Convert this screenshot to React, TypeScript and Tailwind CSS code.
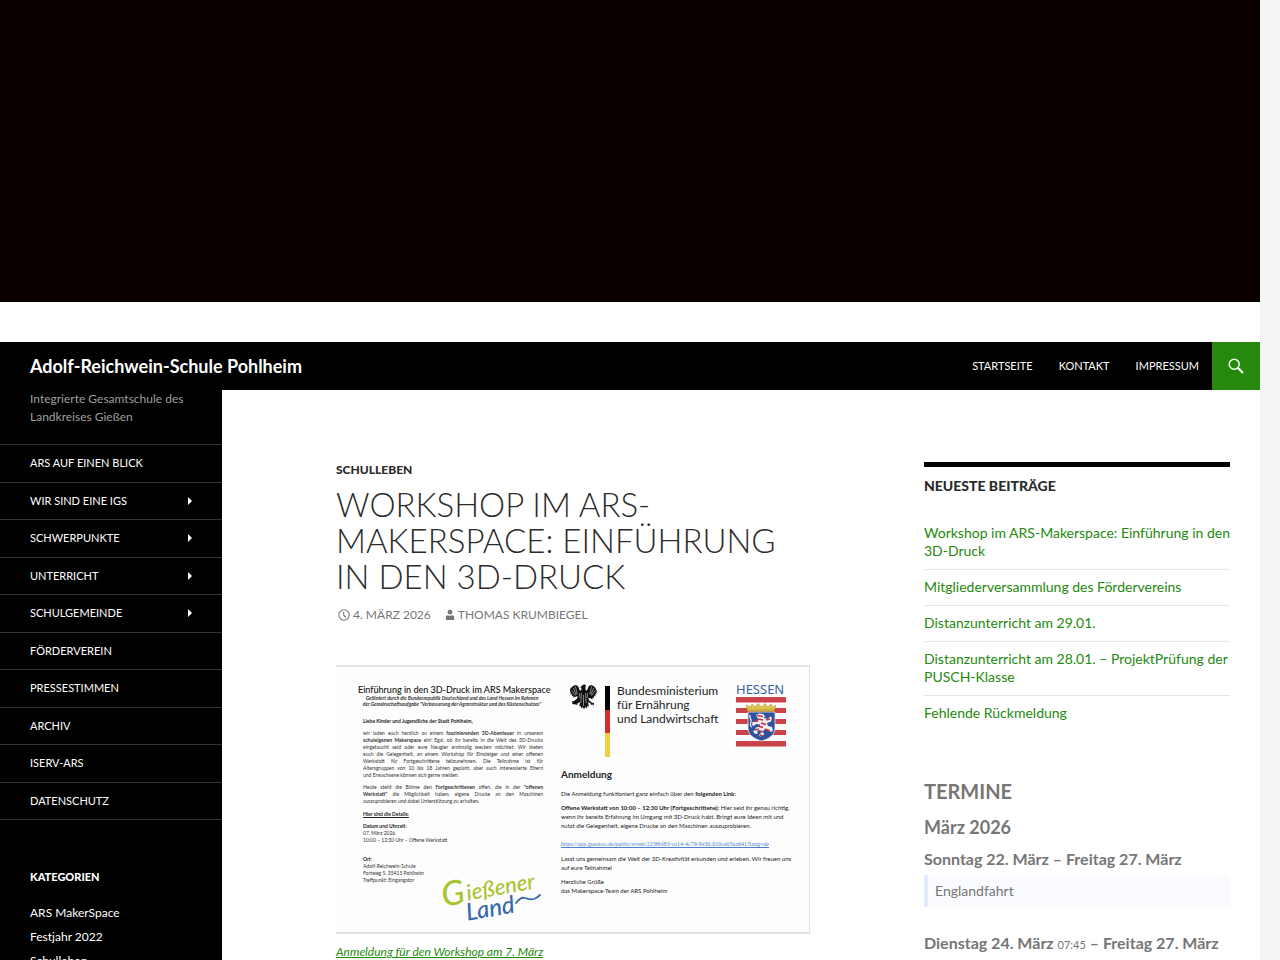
import type { ReactNode } from 'react';

const topLinks = ['Startseite', 'Kontakt', 'Impressum'];

const sideLinks = [
  { label: 'ARS auf einen Blick' },
  { label: 'Wir sind eine IGS', children: true },
  { label: 'Schwerpunkte', children: true },
  { label: 'Unterricht', children: true },
  { label: 'Schulgemeinde', children: true },
  { label: 'Förderverein' },
  { label: 'Pressestimmen' },
  { label: 'Archiv' },
  { label: 'IServ-ARS' },
  { label: 'Datenschutz' },
];

const categories = ['ARS MakerSpace', 'Festjahr 2022', 'Schulleben'];

const recentPosts = [
  'Workshop im ARS-Makerspace: Einführung in den 3D-Druck',
  'Mitgliederversammlung des Fördervereins',
  'Distanzunterricht am 29.01.',
  'Distanzunterricht am 28.01. – ProjektPrüfung der PUSCH-Klasse',
  'Fehlende Rückmeldung',
];

function SearchIcon() {
  return (
    <svg width="16" height="16" viewBox="0 0 16 16" fill="none" stroke="#fff" aria-hidden="true">
      <circle cx="6.2" cy="6.2" r="5" strokeWidth="1.4" />
      <path d="M9.8 9.8l5.2 5.2" strokeWidth="2.2" />
    </svg>
  );
}

function ClockIcon() {
  return (
    <svg width="12" height="12" viewBox="0 0 12 12" fill="none" stroke="#767676" aria-hidden="true">
      <circle cx="6" cy="6" r="5.2" strokeWidth="1.1" />
      <path d="M5.7 2.8v3.4l2.3 2.3" strokeWidth="1.1" />
    </svg>
  );
}

function PersonIcon() {
  return (
    <svg width="10" height="12" viewBox="0 0 10 12" fill="#767676" aria-hidden="true">
      <circle cx="5" cy="3.2" r="2.4" />
      <path d="M.8 11V8.400C.8 7 1.800 6.300 3 6.300c1.300.7 2.700.7 4 0 1.200 0 2.200.7 2.200 2.100V11z" />
    </svg>
  );
}

function EagleLogo() {
  return (
    <svg width="28" height="28" viewBox="0 0 28 28" fill="#111" aria-hidden="true">
      <path d="M12.5 2.2C13.6.9 15.6 1.2 16 2.8l-.6 1.4.3 3.2c1 .4 1.6.2 1.8-.9.3-2.1 1.5-4 3.8-4.4 3.1.8 5.4 4 5.8 7.8l-1.4-.8.9 2.7-1.7-.9.7 2.7-1.8-1 .5 2.6-1.8-1 .2 2.4-2.4-1.4-1.8-.2.4 2.2 3.5 2.8 2.1-.2-.9 1.2.3 1.8-1.6-1.3-1.9.6.6-1.3-3-1.8.9 4.4-1.5-.6-.4 2.6-1.4-1.3-1.6 2-1.5-2-1.4 1.3-.4-2.6-1.5.6.9-4.4-3 1.8.6 1.3-1.9-.6L2.2 21l.3-1.8-.9-1.2 2.1.2 3.5-2.8.4-2.2-1.8.2-2.4 1.4.2-2.4-1.8 1 .5-2.6-1.8 1 .7-2.7-1.7.9.9-2.7-1.1.8C-.3 6.1 2 2.900 5.500 2.100c2.300.4 3.500 2.300 3.800 4.400.2 1.100.8 1.300 1.800.9l.4-2.800-1.800.1z" />
      <path
        d="M5.4 3.3l1.7 7.8M3.3 4.9l3 7M1.7 7.2l3.7 5.4M21.6 3.3l-1.7 7.8M23.7 4.9l-3 7M25.3 7.2l-3.7 5.4M11.5 10l-.7 10M15.5 10l.7 10M13.5 12v11M9.4 10l.5 5M17.6 10l-.5 5"
        stroke="#fdfdfd"
        strokeWidth=".5"
        fill="none"
      />
    </svg>
  );
}

function HessenArms() {
  return (
    <svg width="50" height="50" viewBox="0 0 50 50" aria-hidden="true">
      <path d="M0 0h50v5.500H0zM0 11h50v5H0zM0 22h50v5H0zM0 33h50v5H0zM0 44h50v5.500H0z" fill="#cb4348" />
      <path d="M12 15h27v16c0 7-6 11-13.5 13C18 42 12 38 12 31z" fill="#2f529f" stroke="#e8e8ef" strokeWidth=".8" />
      <path d="M12 14.5L10 8l4 2 2-3 3 3 3-3.5 3.5 3.5 3.5-3.5 3 3.5 3-3 2 3 3-2-2 6.5z" fill="#dfc34e" stroke="#a98b35" strokeWidth=".5" />
      <path d="M13 13h25" stroke="#a98b35" strokeWidth=".7" />
      <path
        d="M20 18l3-1.500 4 .5 2 2-1 2 4 1 2-2.500 2 1-1 4-4 1.500 1 3 4 1 1 4-3 1-1-2-4-1-2 2 1 4-4 1.500-1-1.500 2-2-1-3-3 1 1 2.500-3 .5-2-3 2-1 1-2.500 4-1v-2l-4-.5-2 2-2-1 .5-3 4-1 2 .5-.5-2.500z"
        fill="#f3eef1"
      />
      <path d="M21 18.5l6 1M22 22l5 1M18 24.5l4-.5M25 26l5 1.500M22 29l5 1.500M19 33l4-1M24 34l3 1M29 32l5 2M30 23l4-1M24 38l3 1" stroke="#c93840" strokeWidth="1.7" />
      <path d="M14 18c-1 3 2 4 1 7s-1 4 1 5" stroke="#f3eef1" strokeWidth="1.3" fill="none" />
    </svg>
  );
}

function GiessenerLandLogo() {
  return (
    <svg width="100" height="46" viewBox="0 0 100 46" className="shrink-0 overflow-visible" role="img" aria-label="Gießener Land">
      <g transform="rotate(-10 50 23)" fontStyle="italic" fontFamily="Lato, sans-serif" fontWeight="500">
        <text x="0" y="22" fontSize="34" fill="#a9c431">G</text>
        <text x="25" y="20" fontSize="22" fill="#a9c431">ießener</text>
        <text x="21" y="40" fontSize="24" fill="#3868ae">Land</text>
      </g>
      <path d="M73 27c3-4 6-6 9-5 4 1 5 2 9 1 3-1 4-2 6-4" fill="none" stroke="#3868ae" strokeWidth="1.8" strokeLinecap="round" />
    </svg>
  );
}

// One full line of the justified text block
function Line({ children }: { children: ReactNode }) {
  return <span className="block whitespace-nowrap [text-align-last:justify]">{children}</span>;
}

function Flyer() {
  return (
    <div className="flex w-full border-y-2 border-r border-[#e1e1e1] bg-[#fdfdfd] pb-[10px] text-[#333]">
      <div className="ml-[22px] w-[188px] shrink-0 pt-[18px] text-[5px] leading-[7px]">
        <h2 className="text-center text-[9px] leading-[10px] font-medium whitespace-nowrap text-[#111]">Einführung in den 3D-Druck im ARS Makerspace</h2>
        <p className="text-center leading-[6px] font-bold whitespace-nowrap italic">
          Gefördert durch die Bundesrepublik Deutschland und das Land Hessen im Rahmen
          <br />
          der Gemeinschaftsaufgabe "Verbesserung der Agrarstruktur und des Küstenschutzes"
        </p>
        <div className="mr-[3px] ml-[5px]">
          <p className="mt-[11px] font-bold text-[#222]">Liebe Kinder und Jugendliche der Stadt Pohlheim,</p>
          <p className="mt-[5px]">
            <Line>wir laden euch herzlich zu einem <b>faszinierenden 3D-Abenteuer</b> in unserem</Line>
            <Line><b>schuleigenen Makerspace</b> ein! Egal, ob ihr bereits in die Welt des 3D-Drucks</Line>
            <Line>eingetaucht seid oder eure Neugier erstmalig wecken möchtet: Wir bieten</Line>
            <Line>euch die Gelegenheit, an einem Workshop für Einsteiger und einer offenen</Line>
            <Line>Werkstatt für Fortgeschrittene teilzunehmen. Die Teilnahme ist für</Line>
            <Line>Altersgruppen von 10 bis 18 Jahren geplant, aber auch interessierte Eltern</Line>
            und Erwachsene können sich gerne melden.
          </p>
          <p className="mt-[5px]">
            <Line>Heute steht die Bühne den <b>Fortgeschrittenen</b> offen, die in der <b>"offenen</b></Line>
            <Line><b>Werkstatt"</b> die Möglichkeit haben, eigene Drucke an den Maschinen</Line>
            auszuprobieren und dabei Unterstützung zu erhalten.
          </p>
          <p className="mt-[6px] font-bold text-[#222] underline">Hier sind die Details:</p>
          <p className="mt-[5px]">
            <b className="text-[#222]">Datum und Uhrzeit:</b>
            <br />
            07. März 2026
            <br />
            10:00 – 12:30 Uhr – Offene Werkstatt
          </p>
          <div className="mt-3 flex items-start justify-between whitespace-nowrap">
            <p>
              <b className="text-[#222]">Ort:</b>
              <br />
              Adolf-Reichwein-Schule
              <br />
              Fortweg 5, 35415 Pohlheim
              <br />
              Treffpunkt: Eingangstor
            </p>
            <div className="pt-5">
              <GiessenerLandLogo />
            </div>
          </div>
        </div>
      </div>
      <div className="ml-[15px] w-[232px] shrink-0 pt-4 text-[6px] leading-[9px] whitespace-nowrap text-[#222]">
        <div className="flex h-[76px] items-start">
          <div className="ml-[9px]">
            <EagleLogo />
          </div>
          <div className="mt-[3px] ml-[7px] flex h-[71px] w-[5px] flex-col">
            <span className="flex-1 bg-black" />
            <span className="flex-1 bg-[#d52b2b]" />
            <span className="flex-1 bg-[#f0cf45]" />
          </div>
          <p className="mt-px ml-[7px] w-[119px] text-[12px] leading-[14px] text-[#222]">
            Bundesministerium
            <br />
            für Ernährung
            <br />
            und Landwirtschaft
          </p>
          <div>
            <p className="font-['Noto_Sans',sans-serif] text-[13px] leading-[13px] text-[#365f9f]">HESSEN</p>
            <div className="mt-px">
              <HessenArms />
            </div>
          </div>
        </div>
        <h2 className="mt-[10px] text-[10px] leading-[10px] font-bold">Anmeldung</h2>
        <p className="mt-[10px]">Die Anmeldung funktioniert ganz einfach über den <b>folgenden Link:</b></p>
        <p className="mt-[5px]">
          <b>Offene Werkstatt von 10:00 – 12:30 Uhr (Fortgeschrittene):</b> Hier seid ihr genau richtig,
          <br />
          wenn ihr bereits Erfahrung im Umgang mit 3D-Druck habt. Bringt eure Ideen mit und
          <br />
          nutzt die Gelegenheit, eigene Drucke an den Maschinen auszuprobieren.
        </p>
        <a href="#anmeldung" className="mt-[10px] block font-['Liberation_Serif',serif] text-[#4a7fd0] underline">
          https://app.guestoo.de/public/event/2238bf83-ca14-4c79-9a30-010ce03aa641?lang=de
        </a>
        <p className="mt-[5px]">
          Lasst uns gemeinsam die Welt der 3D-Kreativität erkunden und erleben. Wir freuen uns
          <br />
          auf eure Teilnahme!
        </p>
        <p className="mt-[5px]">
          Herzliche Grüße
          <br />
          das Makerspace-Team der ARS Pohlheim
        </p>
      </div>
    </div>
  );
}

function SiteHeader() {
  return (
    <header className="flex h-12 items-center bg-black pl-[30px] text-white">
      <h1 className="flex-1 text-[18px] font-bold">
        <a href="#start">Adolf-Reichwein-Schule Pohlheim</a>
      </h1>
      <nav className="flex text-[11px] uppercase">
        {topLinks.map(label => (
          <a key={label} href={`#${label}`} className="px-[13px] leading-[48px]">
            {label}
          </a>
        ))}
      </nav>
      <button type="button" aria-label="Suchen" className="flex h-12 w-12 items-center justify-center bg-[#24890d]">
        <SearchIcon />
      </button>
    </header>
  );
}

function PrimarySidebar() {
  return (
    <div className="w-[222px] shrink-0 bg-black pb-12 text-white">
      <p className="mb-[18px] px-[30px] text-[12px] leading-[18px] text-[#9f9f9f]">Integrierte Gesamtschule des Landkreises Gießen</p>
      <nav className="border-b border-[#333] text-[11px] leading-normal uppercase">
        {sideLinks.map(link => (
          <a key={link.label} href={`#${link.label}`} className="flex items-center justify-between border-t border-[#333] px-[30px] py-[10px]">
            {link.label}
            {link.children && (
              <svg width="4" height="8" viewBox="0 0 4 8" fill="#fff" aria-hidden="true">
                <path d="M0 0l4 4-4 4z" />
              </svg>
            )}
          </a>
        ))}
      </nav>
      <section className="px-[30px] pt-12">
        <h2 className="text-[11px] leading-[18px] font-black uppercase">Kategorien</h2>
        <ul className="mt-[15px] text-[12px] leading-6">
          {categories.map(name => (
            <li key={name}>
              <a href={`#${name}`}>{name}</a>
            </li>
          ))}
        </ul>
      </section>
    </div>
  );
}

function Article() {
  return (
    <article className="min-w-0 flex-1">
      <a href="#schulleben" className="block text-[12px] leading-4 font-black text-[#2b2b2b] uppercase">
        Schulleben
      </a>
      <h1 className="mt-2 text-[33px] leading-[36px] font-light text-[#2b2b2b] uppercase">
        Workshop im ARS-Makerspace: Einführung in den 3D-Druck
      </h1>
      <div className="mt-[13px] flex text-[12px] leading-4 text-[#767676] uppercase">
        <a href="#datum" className="flex items-center gap-[3px] pl-[2px]">
          <ClockIcon />
          4. März 2026
        </a>
        <a href="#autor" className="ml-[14px] flex items-center gap-[3px]">
          <PersonIcon />
          Thomas Krumbiegel
        </a>
      </div>
      <figure className="mt-[42px]">
        <Flyer />
        <figcaption className="mt-[9px] text-[12px] leading-[18px] italic">
          <a href="#anmeldung" className="text-[#24890d] underline">
            Anmeldung für den Workshop am 7. März
          </a>
        </figcaption>
      </figure>
    </article>
  );
}

function ContentSidebar() {
  return (
    <aside className="w-[306px] shrink-0 text-[14px] leading-[18px] text-[#767676]">
      <section>
        <h2 className="border-t-[5px] border-black pt-[10px] font-black text-[#2b2b2b] uppercase">Neueste Beiträge</h2>
        <ul className="mt-[21px] divide-y divide-[#e5e5e5] text-[#24890d]">
          {recentPosts.map(post => (
            <li key={post} className="pt-2 pb-[9px]">
              <a href="#beitrag">{post}</a>
            </li>
          ))}
        </ul>
      </section>
      <section className="mt-[47px] font-bold">
        <h2 className="text-[20px] leading-[26px]">TERMINE</h2>
        <h3 className="mt-3 text-[18px] leading-[22px]">März 2026</h3>
        <h4 className="mt-[11px] text-[16px] leading-[20px]">Sonntag 22. März – Freitag 27. März</h4>
        <p className="mt-[6px] border-l-4 border-[#e3ecff] bg-[#f9fbff] py-[7px] pl-[7px] font-normal">Englandfahrt</p>
        <h4 className="mt-[26px] text-[16px] leading-[20px]">
          Dienstag 24. März <span className="text-[11px] font-normal">07:45</span> – Freitag 27. März
        </h4>
      </section>
    </aside>
  );
}

export default function App() {
  return (
    <div className="min-h-screen bg-[#f5f5f5] font-[Lato,sans-serif]">
      <div className="flex min-h-screen max-w-[1260px] flex-col bg-white">
        <div className="mb-10 h-[302px] bg-[#0a0000]" />
        <SiteHeader />
        <div className="flex flex-1">
          <PrimarySidebar />
          <main className="flex min-w-0 flex-1 items-start gap-[114px] pt-[72px] pr-[30px] pl-[114px]">
            <Article />
            <ContentSidebar />
          </main>
        </div>
      </div>
    </div>
  );
}
